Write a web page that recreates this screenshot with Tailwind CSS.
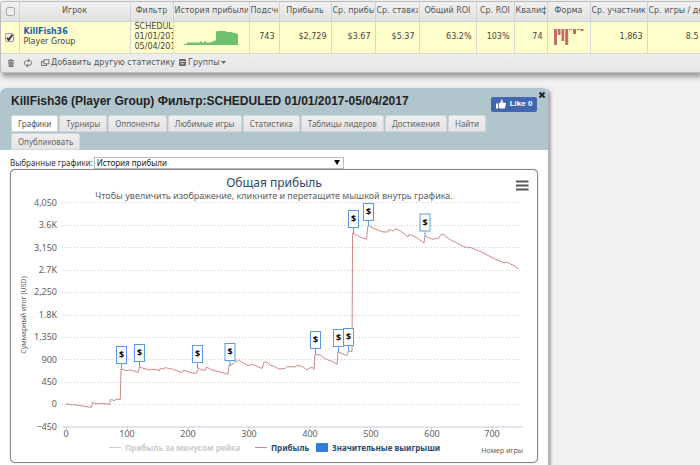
<!DOCTYPE html>
<html lang="ru">
  <head>
    <meta charset="UTF-8" />
    <meta name="viewport" content="width=device-width, initial-scale=1.0" />
    <title>KillFish36 - статистика</title>
    <script src="https://cdn.jsdelivr.net/npm/@tailwindcss/browser@4"></script>
  </head>
  <body
    class="min-h-screen overflow-x-hidden bg-[#f1f1f1] font-['DejaVu_Sans',sans-serif] text-[8px] leading-[10px] text-[#444]"
  >
    <!-- Таблица игроков -->
    <div
      class="mt-px overflow-hidden rounded-l border border-r-0 border-[#bbb] bg-[#ececec] shadow-[2px_4px_5px_#999]"
    >
      <table class="w-[710px] table-fixed border-collapse whitespace-nowrap">
        <colgroup>
          <col class="w-[18px]" />
          <col class="w-[111px]" />
          <col class="w-[43px]" />
          <col class="w-[76px]" />
          <col class="w-[30px]" />
          <col class="w-[52px]" />
          <col class="w-[44px]" />
          <col class="w-[44px]" />
          <col class="w-[57px]" />
          <col class="w-[38px]" />
          <col class="w-[33px]" />
          <col class="w-[43px]" />
          <col class="w-[57px]" />
          <col class="w-[64px]" />
        </colgroup>
        <thead>
          <tr
            class="h-[19px] bg-linear-to-b from-[#f0f0f0] to-[#e2e2e2] text-[#555] *:border-r *:border-b *:border-[#d2d2d6] *:px-px *:font-normal"
          >
            <th>
              <input
                type="checkbox"
                aria-label="Выбрать всех"
                class="ml-1 block size-[9px] appearance-none rounded-xs border border-[#aaa] bg-[#eee]"
              />
            </th>
            <th>Игрок</th>
            <th>Фильтр</th>
            <th><div class="overflow-hidden text-left">История прибыли</div></th>
            <th><div class="overflow-hidden text-left">Подсчет</div></th>
            <th>Прибыль</th>
            <th><div class="overflow-hidden text-left">Ср. прибыль</div></th>
            <th><div class="overflow-hidden text-left">Ср. ставка</div></th>
            <th>Общий ROI</th>
            <th>Ср. ROI</th>
            <th><div class="overflow-hidden text-left">Квалиф.</div></th>
            <th>Форма</th>
            <th><div class="overflow-hidden text-left">Ср. участников</div></th>
            <th><div class="overflow-hidden text-left">Ср. игры / день</div></th>
          </tr>
        </thead>
        <tbody>
          <tr
            class="h-8 bg-[#ffffcc] text-right *:border-r *:border-b *:border-[#d8d8d8] *:px-1"
          >
            <td>
              <label class="relative block size-[9px]">
                <input
                  type="checkbox"
                  checked
                  aria-label="KillFish36"
                  class="block size-[9px] appearance-none rounded-xs border border-[#999] bg-[#eee]"
                />
                <svg
                  class="pointer-events-none absolute inset-0 size-[9px]"
                  viewBox="0 0 9 9"
                >
                  <path
                    d="M2 4.8 3.8 6.8 7.3 1.8"
                    fill="none"
                    stroke="#333"
                    stroke-width="1.8"
                  />
                </svg>
              </label>
            </td>
            <td class="text-left">
              <a href="#" class="font-bold text-[#1c5fa8]">KillFish36</a><br />
              Player Group
            </td>
            <td class="text-left">
              <div class="-mr-1 overflow-hidden">
                SCHEDULED<br />01/01/2017<br />05/04/2017
              </div>
            </td>
            <td>
              <svg class="mx-auto h-[15px] w-[54px]" viewBox="0 0 54 15">
                <path
                  d="M0 15V14H3V12.500H16V11.500H18V12.500H20V11.500H22V12.500H27V11.500H30V10.500H32V1.500L34 1H41L43 2H47L50 3L54 4V15Z"
                  fill="#6fbf6f"
                />
              </svg>
            </td>
            <td>743</td>
            <td>$2,729</td>
            <td>$3.67</td>
            <td>$5.37</td>
            <td>63.2%</td>
            <td>103%</td>
            <td>74</td>
            <td>
              <svg class="mx-auto h-4 w-[30px]" viewBox="0 0 30 16">
                <g fill="#c06c6c">
                  <rect x="0" y="0" width="3" height="16" />
                  <rect x="3.800" y="0" width="2.700" height="6" />
                  <rect x="7.500" y="0" width="2.700" height="12" />
                  <rect x="11.200" y="0" width="3" height="16" />
                  <rect x="15" y="0" width="3" height="1" />
                  <rect x="19" y="0" width="3" height="5" />
                  <rect x="23" y="0" width="3" height="1" />
                  <rect x="26.500" y="0" width="3" height="2" />
                </g>
              </svg>
            </td>
            <td>1,863</td>
            <td><span class="mr-2">8.5</span></td>
          </tr>
        </tbody>
      </table>
      <div
        class="flex h-[18px] items-center gap-2 bg-linear-to-b from-[#eee] to-[#e6e6e6] pl-1.5 text-[#555]"
      >
        <button aria-label="Удалить">
          <svg class="size-2" viewBox="0 0 8 8">
            <path d="M1 1.500H7M3 .7H5" stroke="#777" />
            <path d="M1.300 2.500H6.700L6.300 8H1.700Z" fill="#777" />
            <path d="M3 3.500V7M5 3.500V7" stroke="#ccc" stroke-width=".6" />
          </svg>
        </button>
        <button aria-label="Обновить">
          <svg class="size-2.5" viewBox="0 0 10 10">
            <g fill="none" stroke="#777">
              <path d="M2.500 7.500A3 3 0 0 1 2.500 3L6 2.500" />
              <path d="M7.500 2.500A3 3 0 0 1 7.500 7L4 7.500" />
            </g>
            <path d="M5 .5 7.500 2.500 5 4.300ZM5 5.700 2.500 7.500 5 9.500Z" fill="#777" />
          </svg>
        </button>
        <button class="flex items-center gap-px">
          <svg class="h-2 w-[9px]" viewBox="0 0 9 8">
            <g fill="#eee" stroke="#777">
              <rect x=".5" y="2.500" width="5" height="4" />
              <rect x="3" y=".8" width="5" height="4" />
            </g>
          </svg>
          Добавить другую статистику
        </button>
        <button class="-ml-1 flex items-center gap-0.5">
          <svg class="size-[7px]" viewBox="0 0 7 7">
            <rect width="7" height="7" rx="1" fill="#666" />
            <path d="M1 2.500H6M1.500 4.800H5.500" stroke="#ddd" />
          </svg>
          Группы
          <svg class="h-[3px] w-[5px]" viewBox="0 0 5 3">
            <path d="M0 0H5L2.500 3Z" fill="#666" />
          </svg>
        </button>
      </div>
    </div>

    <!-- Панель игрока -->
    <section
      class="mt-[15px] w-full max-w-[548px] overflow-clip rounded-t-md bg-white font-['Noto_Sans',sans-serif] shadow-[3px_1px_3px_#aaa]"
    >
      <header class="relative bg-[#b1c5cd] px-[11px]">
        <button aria-label="Закрыть" class="absolute top-1 right-[3px]">
          <svg class="size-1.5" viewBox="0 0 6 6">
            <path d="M.5 .5 5.500 5.500M5.500 .5 .5 5.500" stroke="#222" stroke-width="2" />
          </svg>
        </button>
        <div class="flex h-[27px] items-center justify-between">
          <h1
            class="font-['Liberation_Sans',sans-serif] text-[12px] leading-[14px] font-bold text-[#222]"
          >
            KillFish36 (Player Group) Фильтр:SCHEDULED 01/01/2017-05/04/2017
          </h1>
          <button
            class="mt-1.5 flex h-[15px] w-[46px] items-center justify-center gap-1 rounded-xs bg-[#4267b2] font-['Liberation_Sans',sans-serif] font-bold text-white"
          >
            <svg class="size-[10px]" viewBox="0 0 10 10">
              <path
                d="M0 4.500H2.200V9.500H0ZM3 4.500 5 2.500 5.300 .5C6.500 .3 7 1.500 6.500 3.700H9.300L10 4.500 9 9 8.300 9.500H4L3 9Z"
                fill="#fff"
              />
            </svg>
            Like 0
          </button>
        </div>
        <nav class="flex flex-wrap gap-px leading-[11px] text-[#666]">
          <a href="#" class="rounded-t-xs border border-[#d0d6d9] bg-white px-1.5 py-0.5 text-[#555]">Графики</a>
          <a href="#" class="rounded-t-xs border border-[#d0d6d9] bg-linear-to-b from-[#efefef] to-[#e4e4e4] px-1.5 py-0.5">Турниры</a>
          <a href="#" class="rounded-t-xs border border-[#d0d6d9] bg-linear-to-b from-[#efefef] to-[#e4e4e4] px-1.5 py-0.5">Оппоненты</a>
          <a href="#" class="rounded-t-xs border border-[#d0d6d9] bg-linear-to-b from-[#efefef] to-[#e4e4e4] px-1.5 py-0.5">Любимые игры</a>
          <a href="#" class="rounded-t-xs border border-[#d0d6d9] bg-linear-to-b from-[#efefef] to-[#e4e4e4] px-1.5 py-0.5">Статистика</a>
          <a href="#" class="rounded-t-xs border border-[#d0d6d9] bg-linear-to-b from-[#efefef] to-[#e4e4e4] px-1.5 py-0.5">Таблицы лидеров</a>
          <a href="#" class="rounded-t-xs border border-[#d0d6d9] bg-linear-to-b from-[#efefef] to-[#e4e4e4] px-1.5 py-0.5">Достижения</a>
          <a href="#" class="rounded-t-xs border border-[#d0d6d9] bg-linear-to-b from-[#efefef] to-[#e4e4e4] px-1.5 py-0.5">Найти</a>
          <a href="#" class="rounded-t-xs border border-[#d0d6d9] bg-linear-to-b from-[#efefef] to-[#e4e4e4] px-1.5 py-0.5">Опубликовать</a>
        </nav>
      </header>

      <div class="px-2.5 pt-[7px] pb-4 text-[#222]">
        <div class="flex items-center gap-px">
          <label for="grafik" class="whitespace-nowrap text-[#333]">Выбранные графики:</label>
          <div class="relative w-[250px]">
            <select
              id="grafik"
              class="block h-3 w-full appearance-none border border-[#bbb] bg-white px-0.5 leading-[10px]"
            >
              <option>История прибыли</option>
            </select>
            <svg
              class="pointer-events-none absolute top-[3px] right-1 h-[5px] w-[6px]"
              viewBox="0 0 6 5"
            >
              <path d="M0 0H6L3 5Z" fill="#000" />
            </svg>
          </div>
        </div>

        <!-- График прибыли -->
        <div
          class="rounded-[5px] border border-[#888] bg-white shadow-[0_0_1px_#777]"
        >
          <svg
            class="block h-auto w-full"
            viewBox="11 170 526 292"
            font-family="Noto Sans, sans-serif"
            font-size="9"
            fill="#606060"
          >
            <text x="274" y="187" text-anchor="middle" font-size="12" fill="#274b6d">Общая прибыль</text>
            <path d="M516 181.500H528.500M516 185.500H528.500M516 189.500H528.500" stroke="#555" stroke-width="2" />

            <!-- Сетка -->
            <path
              d="M62 202.500H521M62 225.500H521M62 247.500H521M62 270.500H521M62 292.500H521M62 315.500H521M62 337.500H521M62 359.500H521M62 382.500H521M62 404.500H521"
              stroke="#ccc"
              stroke-dasharray="1 2"
            />
            <path d="M62 427H523" stroke="#d8dde2" stroke-width="1.500" />
            <path
              d="M66.500 427V430M127.500 427V430M188.500 427V430M248.500 427V430M309.500 427V430M370.500 427V430M431.500 427V430M492.500 427V430"
              stroke="#c0d0e0"
            />
            <text x="274" y="199" text-anchor="middle">Чтобы увеличить изображение, кликните и перетащите мышкой внутрь графика.</text>

            <g text-anchor="end">
              <text x="57" y="206">4,050</text>
              <text x="57" y="228">3.6K</text>
              <text x="57" y="251">3,150</text>
              <text x="57" y="273">2.7K</text>
              <text x="57" y="295">2,250</text>
              <text x="57" y="318">1.8K</text>
              <text x="57" y="340">1,350</text>
              <text x="57" y="363">900</text>
              <text x="57" y="385">450</text>
              <text x="57" y="407">0</text>
              <text x="57" y="430">−450</text>
            </g>
            <g text-anchor="middle">
              <text x="66" y="437">0</text>
              <text x="127" y="437">100</text>
              <text x="188" y="437">200</text>
              <text x="249" y="437">300</text>
              <text x="310" y="437">400</text>
              <text x="371" y="437">500</text>
              <text x="432" y="437">600</text>
              <text x="492" y="437">700</text>
            </g>
            <text transform="translate(26 315) rotate(-90)" text-anchor="middle" font-size="7">Суммарный итог (USD)</text>
            <text x="523" y="453" text-anchor="end" font-size="7">Номер игры</text>

            <path
              fill="none"
              stroke="#cf8a8a"
              stroke-linejoin="round"
              d="M66 404.300 68 403.800 70 404.500 72 405 75 404.600 80 405.600 86 406.600 91.500 407.300 92.300 402.600 97 403.800 104 403.500 109.500 404.500 110.300 399.500 115 400.600 116 399 120.300 399.500 121 369 126 370.600 131 370 138.300 372.500 139.300 367 144 368.500 150 370 152 369.300 158 370 159 371 160 368.500 164 369 165 367.600 172 369 182 372.500 183.600 370.300 192 373 196.600 373.300 198 368.500 205 370.600 206.500 367 212 370 218 371.500 228 374.300 229 365.500 233 364 235 361.500 237.500 361 238.600 360 244 363.500 248 365.600 251 364.600 254 365 262 368.500 264 362 267 362 270 365 273 366 279 369 285 368.500 287 366.500 295 367 297 365.300 302 366.300 307 370 309 368.500 312 367 314 369.500 315 354.500 321 355 323 357.500 328 360 333 361.500 337 364.500 338 352 347 355.600 348.500 351 352 351.500 352.600 233 360 237 366.500 239.300 368 225.300 375 229 383 232 388 232 389 229.500 393 231 396 229 400 230.500 408 237 409 234.300 416 237.300 424 243 425 236 433 239.500 437 238 438 239 441 234.500 443 234 449 239 455 242 461 245.500 468 248 470 247.300 482 252.300 495 259 504 263 507 262 511 264.500 514 265.500 518.500 269"
            />

            <!-- Флажки крупных выигрышей -->
            <g id="flags"></g>

            <!-- Легенда -->
            <g font-size="8" font-weight="bold">
              <path d="M109 447.500H121" stroke="#ccc" />
              <text x="125" y="451" fill="#ccc">Прибыль за минусом рейка</text>
              <path d="M255 447.500H267" stroke="#cf8a8a" />
              <text x="271" y="451" fill="#274b6d">Прибыль</text>
              <rect x="316" y="443" width="12" height="9" rx="1" fill="#2f7ed8" />
              <text x="332" y="451" fill="#274b6d">Значительные выигрыши</text>
            </g>
          </svg>
        </div>
      </div>
    </section>

    <script>
      // x и y - точка на линии, к которой крепится флажок
      const flags = [
        [121.5, 369],
        [139.5, 367],
        [197.5, 368],
        [230, 366],
        [315.5, 354],
        [338.5, 352],
        [348.5, 351],
        [353.5, 233],
        [368.5, 226],
        [425, 236.5],
      ];

      document.getElementById("flags").innerHTML = flags
        .map(
          ([x, y]) => `
            <path d="M${x} ${y}V${y - 5}" stroke="#5b9be6" />
            <rect x="${x - 5}" y="${y - 22.5}" width="10" height="17" fill="#fff" stroke="#5b9be6" />
            <text x="${x}" y="${y - 11}" text-anchor="middle" font-weight="bold" fill="#000">$</text>`
        )
        .join("");
    </script>
  </body>
</html>
